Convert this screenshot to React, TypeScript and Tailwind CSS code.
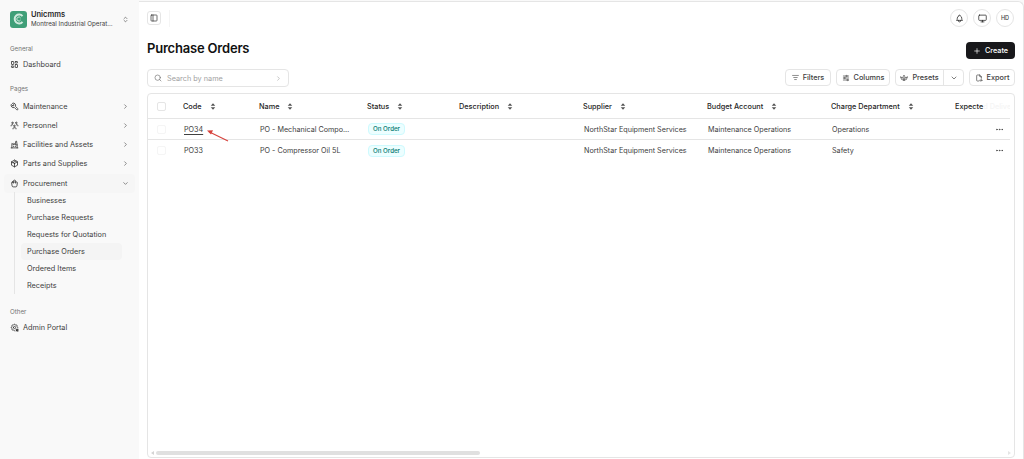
import { ChevronDown, ChevronRight, ChevronsUpDown, Ellipsis, ListFilter, Monitor, PanelLeft, Plus, Search } from "lucide-react";
import {
  TbAdjustmentsHorizontal,
  TbBell,
  TbBuildingFactory2,
  TbFileExport,
  TbLayoutDashboard,
  TbPackage,
  TbPlant2,
  TbSettingsCog,
  TbShoppingBag,
  TbTool,
  TbUsersGroup,
} from "react-icons/tb";
import type { ComponentType, ReactNode } from "react";

type Icon = ComponentType<{ className?: string; strokeWidth?: number }>;

const pages: { label: string; icon: Icon }[] = [
  { label: "Maintenance", icon: TbTool },
  { label: "Personnel", icon: TbUsersGroup },
  { label: "Facilities and Assets", icon: TbBuildingFactory2 },
  { label: "Parts and Supplies", icon: TbPackage },
];

const procurement = [
  "Businesses",
  "Purchase Requests",
  "Requests for Quotation",
  "Purchase Orders",
  "Ordered Items",
  "Receipts",
];

const columns = [
  { label: "Code", width: "w-[76px]" },
  { label: "Name", width: "w-[108px]" },
  { label: "Status", width: "w-[92px]" },
  { label: "Description", width: "w-[124px]" },
  { label: "Supplier", width: "w-[124px]" },
  { label: "Budget Account", width: "w-[124px]" },
  { label: "Charge Department", width: "w-[124px]" },
];

const rows = [
  { code: "PO34", name: "PO - Mechanical Compo…", department: "Operations" },
  { code: "PO33", name: "PO - Compressor Oil 5L", department: "Safety" },
];

function SortIcon() {
  return (
    <svg viewBox="0 0 8 10" className="ml-[8px] h-[7px] w-[6px] text-neutral-600" fill="currentColor">
      <path d="M4 0.5 7.2 4H0.8Z" />
      <path d="M4 9.5 0.8 6h6.4Z" />
    </svg>
  );
}

function SectionLabel({ children, className }: { children: ReactNode; className: string }) {
  return <div className={`pl-[6px] text-[6.2px] leading-[8px] text-neutral-500 ${className}`}>{children}</div>;
}

function NavItem({ label, icon: IconCmp, open }: { label: string; icon: Icon; open?: boolean }) {
  return (
    <div className="flex h-[19px] items-center rounded-[4px] pl-[6px] pr-[6px] text-[7.3px] text-neutral-700">
      <IconCmp className="mr-[4px] h-[9px] w-[9px] shrink-0 text-neutral-800" />
      <span className="flex-1 pt-[1px] leading-[10px]">{label}</span>
      {open ? (
        <ChevronDown className="h-[7px] w-[7px] text-neutral-700" />
      ) : (
        <ChevronRight className="h-[7px] w-[7px] text-neutral-700" />
      )}
    </div>
  );
}

function ToolButton({ children, className = "" }: { children: ReactNode; className?: string }) {
  return (
    <button
      className={`flex h-[17px] items-center justify-center gap-[4px] rounded-[4px] border border-neutral-200 bg-white text-[7.3px] font-medium text-neutral-700 ${className}`}
    >
      {children}
    </button>
  );
}

function Sidebar() {
  return (
    <aside className="h-full w-[139px] shrink-0 bg-[#f9f9f9] px-[4px]">
      <div className="flex items-center pl-[6px] pt-[10px]">
        <div className="flex h-[17px] w-[17px] items-center justify-center rounded-[3px] bg-[#3f9f78]">
          <svg viewBox="0 0 12 12" className="h-[12px] w-[12px]" fill="none" stroke="#cfe9dd" strokeWidth="2">
            <path d="M9.5 3.2A4.4 4.4 0 1 0 9.5 8.8" />
            <path d="M7.6 5A2 2 0 1 0 7.6 7" strokeWidth="1" />
          </svg>
        </div>
        <div className="ml-[4px] flex-1">
          <div className="text-[7.5px] font-semibold leading-[9px] text-neutral-800">Unicmms</div>
          <div className="w-[83px] truncate text-[6.2px] leading-[9px] text-neutral-700">Montreal Industrial Operations</div>
        </div>
        <ChevronsUpDown className="mr-[6px] h-[7px] w-[7px] text-neutral-700" />
      </div>

      <SectionLabel className="mt-[17px]">General</SectionLabel>
      <div className="mt-[2px] flex h-[19px] items-center pl-[6px] text-[7.3px] text-neutral-700">
        <TbLayoutDashboard className="mr-[4px] h-[9px] w-[9px] text-neutral-800" />
        <span className="pt-[1px] leading-[10px]">Dashboard</span>
      </div>

      <SectionLabel className="mt-[11px]">Pages</SectionLabel>
      <div className="mt-[4px]">
        {pages.map((p) => (
          <NavItem key={p.label} label={p.label} icon={p.icon} />
        ))}
        <div className="mt-[1px] rounded-[4px] bg-[#f6f6f6]">
          <NavItem label="Procurement" icon={TbShoppingBag} open />
        </div>
      </div>

      <div className="-mt-[1px] ml-[10px] mr-[13px] border-l border-neutral-200 pl-[12px]">
        {procurement.map((label) => (
          <div
            key={label}
            className={`flex h-[17px] items-center rounded-[4px] pt-[1px] text-[7.3px] leading-[10px] text-neutral-700 ${
              label === "Purchase Orders" ? "-ml-[6px] bg-[#f4f4f4] pl-[6px]" : ""
            }`}
          >
            {label}
          </div>
        ))}
      </div>

      <SectionLabel className="mt-[14px]">Other</SectionLabel>
      <div className="mt-[2px] flex h-[19px] items-center pl-[6px] text-[7.3px] text-neutral-700">
        <TbSettingsCog className="mr-[4px] h-[9px] w-[9px] text-neutral-800" />
        <span className="pt-[1px] leading-[10px]">Admin Portal</span>
      </div>
    </aside>
  );
}

function Table() {
  return (
    <div className="relative mx-[8px] min-h-0 flex-1 overflow-hidden rounded-[4px] border border-neutral-200">
      <div className="mr-[4px] flex h-[25px] items-center border-b border-neutral-200 text-[7.3px] font-medium leading-[10px] text-neutral-800">
        <div className="flex w-[35px] shrink-0 pl-[9px]">
          <span className="h-[9px] w-[9px] rounded-[2px] border border-neutral-200" />
        </div>
        {columns.map((c) => (
          <div key={c.label} className={`flex shrink-0 items-center ${c.width}`}>
            <span className="pt-[1px]">{c.label}</span>
            <SortIcon />
          </div>
        ))}
        <div className="min-w-0 flex-1 overflow-hidden whitespace-nowrap pt-[1px]">
          Expecte<span className="text-neutral-100">d Delive</span>
        </div>
      </div>

      {rows.map((r, i) => (
        <div
          key={r.code}
          className={`mr-[4px] flex h-[21px] items-center text-[7.2px] leading-[10px] text-neutral-700 ${i === 0 ? "border-b border-neutral-200" : ""}`}
        >
          <div className="flex w-[35px] shrink-0 pl-[9px]">
            <span className="h-[9px] w-[9px] rounded-[2px] border border-neutral-100" />
          </div>
          <div className="w-[76px] shrink-0 pl-[1px] pt-[1px]">
            <span className={r.code === "PO34" ? "underline underline-offset-[2px]" : ""}>{r.code}</span>
          </div>
          <div className="w-[108px] shrink-0 pl-[1px] pt-[1px]">{r.name}</div>
          <div className="w-[92px] shrink-0 pl-[1px]">
            <span className="inline-flex h-[12px] items-center rounded-[4px] border border-cyan-100 bg-cyan-50 px-[4px] text-[6.2px] font-medium text-teal-700">
              On Order
            </span>
          </div>
          <div className="w-[124px] shrink-0" />
          <div className="w-[124px] shrink-0 pl-[1px] pt-[1px]">NorthStar Equipment Services</div>
          <div className="w-[124px] shrink-0 pl-[1px] pt-[1px]">Maintenance Operations</div>
          <div className="w-[124px] shrink-0 pl-[1px] pt-[1px]">{r.department}</div>
          <div className="flex flex-1 justify-end pr-[6px]">
            <Ellipsis className="h-[9px] w-[9px] text-neutral-700" />
          </div>
        </div>
      ))}

      <svg className="absolute left-[58px] top-[32px] h-[22px] w-[30px]" viewBox="0 0 30 22" fill="none">
        <path d="M22 15 3 5.8" stroke="#d6423c" strokeWidth="1.1" />
        <path d="M1 4.5 7 4.2 5 8.4Z" fill="#d6423c" />
      </svg>

      <div className="absolute bottom-[2px] left-[3px] right-[3px] flex h-[4px] items-center">
        <span className="mr-[2px] h-0 w-0 border-y-[2px] border-r-[3px] border-y-transparent border-r-neutral-300" />
        <div className="h-[4px] w-[324px] rounded-full bg-[#e0e0e0]" />
        <span className="ml-auto h-0 w-0 border-y-[2px] border-l-[3px] border-y-transparent border-l-neutral-200" />
      </div>
    </div>
  );
}

export default function App() {
  return (
    <div className="flex h-[459px] w-[1024px] overflow-hidden bg-[#f9f9f9] font-['Inter',sans-serif]">
      <Sidebar />
      <main className="mt-[1px] flex h-[458px] min-w-0 flex-1 flex-col rounded-tr-[6px] border-t border-r border-neutral-200 bg-white pb-[1px]">
        <header className="flex h-[32px] items-center pl-[8px] pr-[9px]">
          <button className="flex h-[14px] w-[14px] items-center justify-center rounded-[3px] border border-neutral-200">
            <PanelLeft className="h-[8px] w-[8px] text-neutral-800" />
          </button>
          <div className="ml-[8px] h-[17px] w-px bg-neutral-100" />
          <div className="ml-auto flex items-center gap-[5px]">
            <span className="flex h-[18px] w-[18px] items-center justify-center rounded-full border border-neutral-200">
              <TbBell className="h-[9px] w-[9px] text-neutral-800" />
            </span>
            <span className="flex h-[18px] w-[18px] items-center justify-center rounded-full border border-neutral-200">
              <Monitor className="h-[9px] w-[9px] text-neutral-800" />
            </span>
            <span className="flex h-[18px] w-[18px] items-center justify-center rounded-full border border-neutral-200 text-[5.5px] font-medium text-neutral-700">
              HD
            </span>
          </div>
        </header>

        <div className="flex h-[29px] items-center justify-between pl-[8px] pr-[8px]">
          <h1 className="text-[13px] font-semibold tracking-[-0.2px] text-[#111]">Purchase Orders</h1>
          <button className="mt-[4px] flex h-[17px] w-[49px] items-center justify-center gap-[4px] rounded-[4px] bg-[#18181b] text-[7.3px] font-medium leading-[10px] text-white">
            <Plus className="h-[8px] w-[8px]" />
            <span className="pt-[1px]">Create</span>
          </button>
        </div>

        <div className="flex h-[30px] items-start justify-between pl-[8px] pr-[8px] pt-[6px]">
          <div className="flex h-[18px] w-[142px] items-center rounded-[4px] border border-neutral-200 px-[6px] text-[7.3px] leading-[10px] text-neutral-400">
            <Search className="mr-[5px] h-[8px] w-[8px] text-neutral-500" />
            <span className="flex-1 pt-[1px]">Search by name</span>
            <ChevronRight className="h-[7px] w-[7px]" />
          </div>
          <div className="flex items-center gap-[5px] leading-[10px]">
            <ToolButton className="w-[46px]">
              <ListFilter className="h-[7px] w-[7px]" />
              <span className="pt-[1px]">Filters</span>
            </ToolButton>
            <ToolButton className="w-[54px]">
              <TbAdjustmentsHorizontal className="h-[8px] w-[8px]" />
              <span className="pt-[1px]">Columns</span>
            </ToolButton>
            <div className="flex h-[17px] w-[69px] items-center rounded-[4px] border border-neutral-200 text-[7.3px] font-medium text-neutral-700">
              <span className="flex h-full flex-1 items-center justify-center gap-[4px] border-r border-neutral-200">
                <TbPlant2 className="h-[8px] w-[8px]" />
                <span className="pt-[1px]">Presets</span>
              </span>
              <span className="flex w-[19px] justify-center">
                <ChevronDown className="h-[8px] w-[8px]" />
              </span>
            </div>
            <ToolButton className="w-[46px]">
              <TbFileExport className="h-[8px] w-[8px]" />
              <span className="pt-[1px]">Export</span>
            </ToolButton>
          </div>
        </div>

        <Table />
      </main>
    </div>
  );
}
